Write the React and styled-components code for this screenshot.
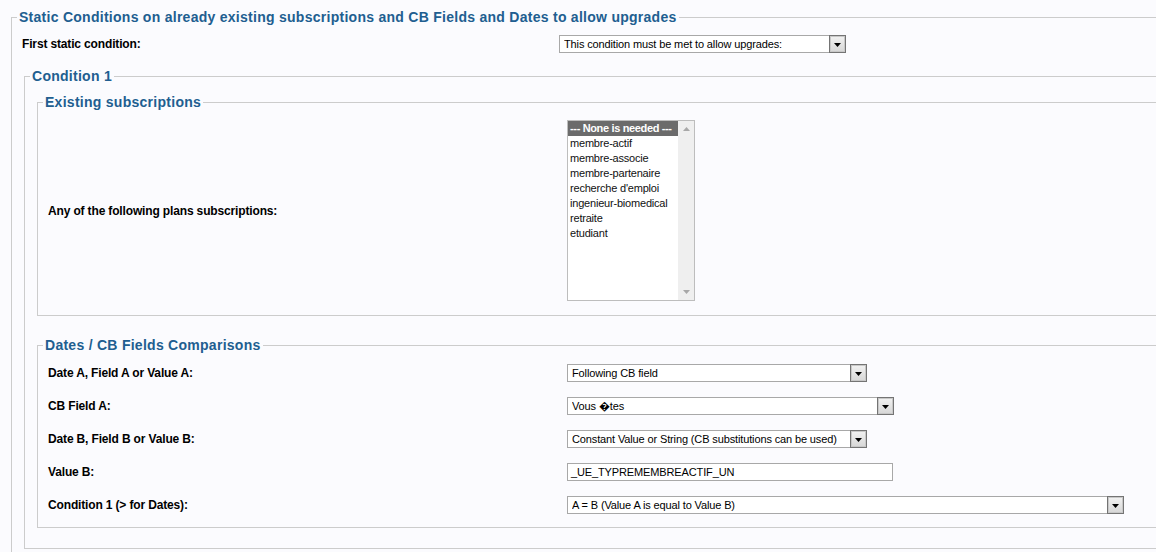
import React from "react";
import styled, { createGlobalStyle } from "styled-components";

const Global = createGlobalStyle`
  html, body { margin: 0; padding: 0; background: #fbfbfe; overflow: hidden; }
  body { font-family: "Liberation Sans", Arial, sans-serif; }
`;

const Page = styled.div`
  width: 1240px;
  padding: 9px 0 0 9px;
  box-sizing: border-box;
`;

const Fieldset = styled.fieldset`
  border: 1px solid #cccccc;
  margin: ${(p) => p.$mt || 0}px 2px 0 2px;
  padding: ${(p) => p.$pt || 0}px 10px ${(p) => p.$pb || 0}px 10px;
  min-width: 0;
`;

const Legend = styled.legend`
  font: bold 14px/16px "Liberation Sans", Arial, sans-serif;
  letter-spacing: 0.27px;
  color: #215e90;
  padding: 0 2px;
  margin-left: -5px;
`;

const Row = styled.div`
  display: grid;
  grid-template-columns: ${(p) => p.$labelW}px auto;
  align-items: center;
  height: ${(p) => p.$h}px;
`;

const Label = styled.div`
  font: bold 12px "Liberation Sans", Arial, sans-serif;
  color: #000;
  letter-spacing: -0.15px;
`;

const SelectBox = styled.div`
  display: flex;
  align-items: center;
  width: ${(p) => p.$w}px;
  height: 18px;
  box-sizing: border-box;
  border: 1px solid #a8a8a8;
  background: #fff;
  font: 11px "Liberation Sans", Arial, sans-serif;
  letter-spacing: -0.13px;
  color: #000;
  padding-left: 4px;
  white-space: nowrap;
`;

const SelectText = styled.span`
  flex: 1;
  overflow: hidden;
`;

const DropButton = styled.span`
  flex: none;
  width: 17px;
  height: 18px;
  margin-right: -1px;
  box-sizing: border-box;
  border: 1px solid #747474;
  box-shadow: inset 0 0 0 1px #c8c8c8;
  background: linear-gradient(#f2f2f2, #d6d6d6);
  display: flex;
  align-items: center;
  justify-content: center;
  padding-top: 2px;
`;

const TextInput = styled.div`
  width: ${(p) => p.$w}px;
  height: 18px;
  box-sizing: border-box;
  border: 1px solid #a8a8a8;
  background: #fff;
  font: 11px/16px "Liberation Sans", Arial, sans-serif;
  letter-spacing: -0.13px;
  color: #000;
  padding-left: 3px;
`;

const ListBox = styled.div`
  display: flex;
  width: 128px;
  height: 181px;
  box-sizing: border-box;
  border: 1px solid #bdbdbd;
  background: #fff;
`;

const Options = styled.div`
  flex: 1;
  min-width: 0;
  display: flex;
  flex-direction: column;
`;

const Option = styled.div`
  height: 15px;
  font: ${(p) => (p.$selected ? "bold" : "normal")} 11px/15px "Liberation Sans", Arial, sans-serif;
  letter-spacing: ${(p) => (p.$selected ? "-0.35px" : "-0.2px")};
  color: ${(p) => (p.$selected ? "#fff" : "#111")};
  background: ${(p) => (p.$selected ? "#6b6b6b" : "transparent")};
  padding-left: 2px;
  white-space: nowrap;
  overflow: hidden;
`;

const ScrollTrack = styled.div`
  width: 16px;
  background: #efefef;
  display: flex;
  flex-direction: column;
  justify-content: space-between;
  align-items: center;
  padding: 6px 0;
  box-sizing: border-box;
`;

const Arrow = ({ up, color = "#000" }) => (
  <svg width="7" height="4" viewBox="0 0 7 4">
    <polygon points={up ? "0,4 7,4 3.5,0" : "0,0 7,0 3.5,4"} fill={color} />
  </svg>
);

const Select = ({ w, children }) => (
  <SelectBox $w={w}>
    <SelectText>{children}</SelectText>
    <DropButton>
      <Arrow />
    </DropButton>
  </SelectBox>
);

const plans = [
  "membre-actif",
  "membre-associe",
  "membre-partenaire",
  "recherche d'emploi",
  "ingenieur-biomedical",
  "retraite",
  "etudiant",
];

export default function App() {
  return (
    <>
      <Global />
      <Page>
        <Fieldset $pt={6} $pb={40}>
          <Legend>Static Conditions on already existing subscriptions and CB Fields and Dates to allow upgrades</Legend>
          <Row $labelW={537} $h={26}>
            <Label>First static condition:</Label>
            <Select w={287}>This condition must be met to allow upgrades:</Select>
          </Row>
          <Fieldset $mt={11} $pt={10} $pb={20}>
            <Legend>Condition 1</Legend>
            <Fieldset $pt={3} $pb={7}>
              <Legend>Existing subscriptions</Legend>
              <Row $labelW={519} $h={195}>
                <Label>Any of the following plans subscriptions:</Label>
                <ListBox>
                  <Options>
                    <Option $selected>--- None is needed ---</Option>
                    {plans.map((p) => (
                      <Option key={p}>{p}</Option>
                    ))}
                  </Options>
                  <ScrollTrack>
                    <Arrow up color="#a8a8a8" />
                    <Arrow color="#a8a8a8" />
                  </ScrollTrack>
                </ListBox>
              </Row>
            </Fieldset>
            <Fieldset $mt={21} $pt={3} $pb={6}>
              <Legend>Dates / CB Fields Comparisons</Legend>
              <Row $labelW={519} $h={33}>
                <Label>Date A, Field A or Value A:</Label>
                <Select w={300}>Following CB field</Select>
              </Row>
              <Row $labelW={519} $h={33}>
                <Label>CB Field A:</Label>
                <Select w={327}>Vous {"\uFFFD"}tes</Select>
              </Row>
              <Row $labelW={519} $h={33}>
                <Label>Date B, Field B or Value B:</Label>
                <Select w={300}>Constant Value or String (CB substitutions can be used)</Select>
              </Row>
              <Row $labelW={519} $h={33}>
                <Label>Value B:</Label>
                <TextInput $w={326}>_UE_TYPREMEMBREACTIF_UN</TextInput>
              </Row>
              <Row $labelW={519} $h={33}>
                <Label>Condition 1 (&gt; for Dates):</Label>
                <Select w={557}>A = B (Value A is equal to Value B)</Select>
              </Row>
            </Fieldset>
          </Fieldset>
        </Fieldset>
      </Page>
    </>
  );
}
